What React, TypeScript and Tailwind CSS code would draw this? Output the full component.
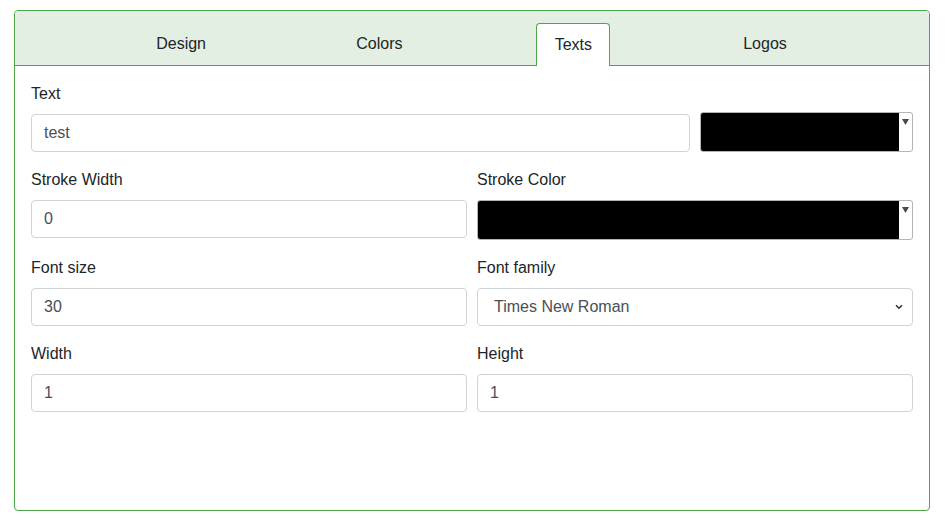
import React from 'react'

/* ─────────── Small pieces ─────────── */
function Label({ children }: { children: React.ReactNode }) {
  return <div className="h-6 leading-6 mb-2 text-[16px] text-[#212529]">{children}</div>
}

function TextInput({ value }: { value: string }) {
  return (
    <div className="h-[38px] border border-[#ced4da] rounded-[4px] bg-white px-3 flex items-center text-[16px] text-[#495057]">
      {value}
    </div>
  )
}

function ColorInput() {
  return (
    <div className="h-10 border border-[#b5b5b5] rounded-[3px] bg-white flex overflow-hidden">
      <div className="flex-1 bg-black" />
      <div className="w-[13px] flex justify-center pt-[6px]">
        <svg width="7" height="6" viewBox="0 0 7 6">
          <path d="M0 0h7L3.5 6z" fill="#4b4b4b" />
        </svg>
      </div>
    </div>
  )
}

function SelectBox({ value }: { value: string }) {
  return (
    <div className="h-[38px] border border-[#ced4da] rounded-[4px] bg-white pl-4 pr-[9px] flex items-center justify-between text-[16px] text-[#495057]">
      <span>{value}</span>
      <svg width="8" height="6" viewBox="0 0 8 6">
        <path d="M1 1.2l3 3 3-3" fill="none" stroke="#333" strokeWidth="1.6" />
      </svg>
    </div>
  )
}

const tabs = ['Design', 'Colors', 'Texts', 'Logos']

/* ─────────── Main Page ─────────── */
export default function App() {
  return (
    <div
      className="min-h-[531px] bg-white pt-[10px] pl-[14px] pr-[20px]"
      style={{ fontFamily: '"Liberation Sans", Arial, sans-serif' }}
    >
      <div className="w-[916px] h-[501px] border border-[#4ca74a] rounded-[4px] overflow-hidden flex flex-col">
        {/* Tabs header */}
        <div className="bg-[#e3efe2] border-b border-[#4ca74a] pt-3 pl-2 pr-[9px] flex justify-evenly">
          {tabs.map((t) =>
            t === 'Texts' ? (
              <div
                key={t}
                className="h-[43px] -mb-px pl-[18px] pr-[17px] leading-6 pt-[9px] bg-white border border-b-0 border-[#4ca74a] rounded-t-[4px] text-[16px] text-[#212529]"
              >
                {t}
              </div>
            ) : (
              <div key={t} className="h-[42px] px-[17px] leading-6 pt-[9px] text-[16px] text-[#212529]">
                {t}
              </div>
            )
          )}
        </div>

        {/* Body */}
        <div className="p-4 flex flex-col gap-4">
          <div className="grid grid-cols-[659px_1fr] gap-[10px] items-end">
            <div>
              <Label>Text</Label>
              <TextInput value="test" />
            </div>
            <ColorInput />
          </div>

          <div className="grid grid-cols-2 gap-[10px]">
            <div>
              <Label>Stroke Width</Label>
              <TextInput value="0" />
            </div>
            <div>
              <Label>Stroke Color</Label>
              <ColorInput />
            </div>
          </div>

          <div className="grid grid-cols-2 gap-[10px]">
            <div>
              <Label>Font size</Label>
              <TextInput value="30" />
            </div>
            <div>
              <Label>Font family</Label>
              <SelectBox value="Times New Roman" />
            </div>
          </div>

          <div className="grid grid-cols-2 gap-[10px]">
            <div>
              <Label>Width</Label>
              <TextInput value="1" />
            </div>
            <div>
              <Label>Height</Label>
              <TextInput value="1" />
            </div>
          </div>
        </div>
      </div>
    </div>
  )
}
